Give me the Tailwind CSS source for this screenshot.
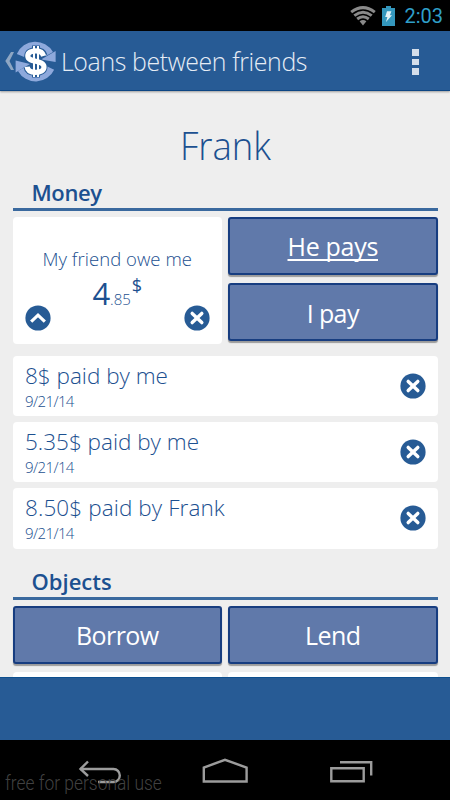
<!DOCTYPE html>
<html lang="en">
<head>
  <meta charset="UTF-8" />
  <title>Loans between friends</title>
  <script src="https://cdn.jsdelivr.net/npm/@tailwindcss/browser@4"></script>
</head>
<body class="bg-black">

  <svg class="hidden" xmlns="http://www.w3.org/2000/svg">
    <symbol id="close" viewBox="0 0 26 26">
      <circle cx="13" cy="13" r="12.6" fill="#275b95" />
      <path d="M8.2 8.4L17.8 17.6M17.8 8.4L8.2 17.6" stroke="#fff" stroke-width="3.4" stroke-linecap="round" />
    </symbol>
    <symbol id="up" viewBox="0 0 26 26">
      <circle cx="13" cy="13" r="12.6" fill="#275b95" />
      <path d="M7.3 15.6L13 10.1L18.7 15.6" fill="none" stroke="#fff" stroke-width="3.2" stroke-linecap="square" />
    </symbol>
  </svg>

  <div class="relative w-[450px] h-[800px] flex flex-col overflow-hidden font-['Open_Sans','Noto_Sans',sans-serif] text-[#1c5090]">

    <!-- Status bar -->
    <div class="h-[31px] shrink-0 bg-black flex items-center justify-end pr-[7px] pt-px">
      <svg class="w-[26px] h-5 mr-[6px]" viewBox="0 0 26 20" fill="none" stroke="#8a8a8a" stroke-width="3">
        <path d="M1.2 6.1Q13 -2.9 24.8 6.1" />
        <path d="M4.3 9.6Q13 2.9 21.7 9.6" />
        <path d="M7.2 13Q13 8.5 18.8 13" />
        <path d="M9.6 15.2Q13 12.6 16.4 15.2L13 19.4Z" fill="#8a8a8a" stroke="none" />
      </svg>
      <svg class="w-[13px] h-5 mr-[9px]" viewBox="0 0 13 20">
        <path d="M4 0H9V2H13V20H0V2H4Z" fill="#3497bd" />
        <path d="M5 5.2H9.4L7.9 9.2H10L4 16L5.4 10.9H3.2Z" fill="#e3f3f8" />
      </svg>
      <span class="font-[Roboto,sans-serif] text-[20px] leading-[30px] text-[#2f9fc8]">2:03</span>
    </div>

    <!-- Action bar -->
    <div class="relative z-10 h-[60px] shrink-0 bg-[#275b95] border-b border-[#0d4684] shadow-[0_1px_2px_rgba(0,0,0,0.35)] flex items-center pl-[5px]">
      <svg class="w-[9px] h-[18px]" viewBox="0 0 9 18">
        <path d="M6 0H9L4.5 9L9 18H6L0.3 9Z" fill="#8ea6c3" />
      </svg>
      <svg class="w-[41px] h-[41px] ml-[1px] mt-px" viewBox="0 0 41 41">
        <g fill="none" stroke="#8ea9dc" stroke-width="8">
          <path d="M5.5 14.5A16.2 16.2 0 0 1 34.5 13" />
          <path d="M35.5 27A16.2 16.2 0 0 1 6.5 28" />
        </g>
        <path d="M40.6 10V21L26 18.5Z" fill="#8ea9dc" />
        <path d="M0.6 31.5V19.5L15 23Z" fill="#8ea9dc" />
        <path d="M29 14.5C28 10.8 24.5 9.8 20.8 9.8C16.3 9.8 12.8 11.5 12.8 15C12.8 22 29 18.5 29 26C29 29.6 25.3 31.4 20.8 31.4C16.3 31.4 12.6 30 12 26" fill="none" stroke="#275b95" stroke-width="7" />
        <path d="M19 4.5V36.5M23 4.5V36.5" stroke="#275b95" stroke-width="4" />
        <path d="M19 5V36M23 5V36" stroke="#fff" stroke-width="2" />
        <path d="M28.6 15C27.6 11 24.5 9.8 20.8 9.8C16.3 9.8 12.8 11.5 12.8 15C12.8 22 29 18.5 29 26C29 29.6 25.3 31.4 20.8 31.4C16.3 31.4 12.6 30 12.2 25.8" fill="none" stroke="#fff" stroke-width="5.2" />
      </svg>
      <h1 class="ml-[5px] whitespace-nowrap font-[350] text-[26px] leading-[58px] text-[#e6edf5] origin-left scale-x-[0.957] tracking-[-0.4px]">Loans between friends</h1>
      <div class="ml-auto mr-[31px] mt-[3px] flex flex-col gap-[3px]">
        <i class="block w-[7px] h-[6.5px] bg-[#d4deea]"></i>
        <i class="block w-[7px] h-[6.5px] bg-[#d4deea]"></i>
        <i class="block w-[7px] h-[6.5px] bg-[#d4deea]"></i>
      </div>
    </div>

    <!-- Content -->
    <div class="h-[586px] shrink-0 overflow-hidden bg-[#eeeeee] pl-[12.5px] pr-[12.5px] pt-[29px]">
      <h2 class="mb-px text-center font-light text-[38px] leading-[50px] scale-x-[0.96]">Frank</h2>

      <h3 class="h-[40px] pt-[8px] pl-[19px] border-b-[3px] border-[#3a699e] font-semibold text-[22px] leading-[26px]"><span class="tracking-[-0.4px]">Money</span></h3>

      <div class="mt-[6px] flex gap-[6px]">
        <div class="w-[209.5px] h-[127px] rounded bg-white px-3 pt-[31px]">
          <p class="text-center font-[350] text-[18.5px] leading-[22px] tracking-[0.05px]">My friend owe me</p>
          <div class="h-[35px] flex items-baseline justify-center">
            <span class="text-[31px] leading-[46px]">4</span>
            <span class="font-[350] text-[15px]">.85</span>
            <span class="relative -top-[13px] ml-px text-[18px]">$</span>
          </div>
          <div class="flex justify-between">
            <svg class="w-[26px] h-[26px]"><use href="#up" /></svg>
            <svg class="w-[26px] h-[26px]"><use href="#close" /></svg>
          </div>
        </div>
        <div class="flex-1 flex flex-col gap-[8px]">
          <button class="h-[58px] rounded-[3px] border-2 border-[#173d80] bg-[#6079aa] shadow-[0_2px_1px_rgba(0,0,0,0.35)] text-white text-[25px] leading-[30px] tracking-[-0.3px]"><span class="underline underline-offset-[3px] decoration-[1.5px] [text-decoration-skip-ink:none]">He pays</span></button>
          <button class="h-[58px] pt-[2px] rounded-[3px] border-2 border-[#173d80] bg-[#6079aa] shadow-[0_2px_1px_rgba(0,0,0,0.35)] text-white text-[25px] leading-[30px] tracking-[-0.6px]">I pay</button>
        </div>
      </div>

      <div class="mt-[12px] flex flex-col gap-[6px]">
        <div class="h-[60.2px] rounded bg-white pl-[12.5px] pr-3 flex items-center justify-between">
          <div class="pt-[3px]">
            <p class="font-[350] text-[22.5px] leading-[27px]">8$ paid by me</p>
            <p class="font-[350] text-[15px] leading-[24px] tracking-[-0.6px]">9/21/14</p>
          </div>
          <svg class="w-[26px] h-[26px]"><use href="#close" /></svg>
        </div>
        <div class="h-[60.2px] rounded bg-white pl-[12.5px] pr-3 flex items-center justify-between">
          <div class="pt-[3px]">
            <p class="font-[350] text-[22.5px] leading-[27px]">5.35$ paid by me</p>
            <p class="font-[350] text-[15px] leading-[24px] tracking-[-0.6px]">9/21/14</p>
          </div>
          <svg class="w-[26px] h-[26px]"><use href="#close" /></svg>
        </div>
        <div class="h-[60.2px] rounded bg-white pl-[12.5px] pr-3 flex items-center justify-between">
          <div class="pt-[3px]">
            <p class="font-[350] text-[22.5px] leading-[27px] tracking-[0.1px]">8.50$ paid by Frank</p>
            <p class="font-[350] text-[15px] leading-[24px] tracking-[-0.6px]">9/21/14</p>
          </div>
          <svg class="w-[26px] h-[26px]"><use href="#close" /></svg>
        </div>
      </div>

      <h3 class="mt-[11px] h-[40px] pt-[8px] pl-[19px] border-b-[3px] border-[#3a699e] font-semibold text-[22px] leading-[26px]">Objects</h3>

      <div class="mt-[6px] grid grid-cols-2 gap-x-[6px] gap-y-[8px]">
        <button class="h-[58px] rounded-[3px] border-2 border-[#173d80] bg-[#6079aa] shadow-[0_2px_1px_rgba(0,0,0,0.35)] text-white text-[25px] leading-[30px] tracking-[-0.6px]">Borrow</button>
        <button class="h-[58px] rounded-[3px] border-2 border-[#173d80] bg-[#6079aa] shadow-[0_2px_1px_rgba(0,0,0,0.35)] text-white text-[25px] leading-[30px] tracking-[-0.6px]">Lend</button>
        <div class="h-[60px] rounded bg-white"></div>
        <div class="h-[60px] rounded bg-white"></div>
      </div>
    </div>

    <div class="h-[63px] shrink-0 bg-[#275b95] border-t border-[#0d4f8e]"></div>

    <!-- Navigation bar -->
    <div class="h-[60px] shrink-0 bg-black flex items-start pt-[17px] pl-[78px]">
      <svg class="w-[44px] h-[28px]" viewBox="0 0 44 28" fill="none" stroke="#9c9c9c" stroke-width="2.4">
        <path d="M2 12H35.5A6 6.2 0 0 1 35.5 25H20" />
        <path d="M10 4.5L2.5 12L10 19" />
      </svg>
      <svg class="w-[48px] h-[28px] ml-[78px]" viewBox="0 0 48 28" fill="none" stroke="#9c9c9c" stroke-width="2.4">
        <path d="M3.8 24.5V10.5L25 2.8L46.6 10.5V24.5Z" />
      </svg>
      <svg class="w-[46px] h-[28px] ml-[80px]" viewBox="0 0 46 28" fill="none" stroke="#9c9c9c" stroke-width="2.4">
        <path d="M3.3 11.3H35.7V24.3H3.3Z" />
        <path d="M12 5.2H43.2V18.5" />
      </svg>
    </div>

    <p class="absolute left-[5px] bottom-[4px] whitespace-nowrap font-[Roboto,sans-serif] font-light text-[20px] leading-[26px] origin-left scale-x-[0.87] text-[#4a4a4a]/90">free for personal use</p>
  </div>
</body>
</html>
